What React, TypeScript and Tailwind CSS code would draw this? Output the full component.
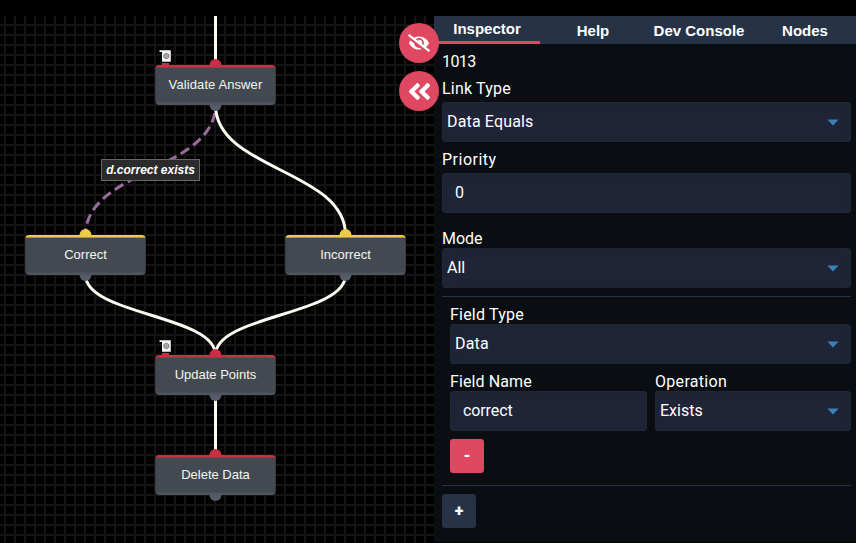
import React from 'react';
import { FaEyeSlash, FaAngleDoubleLeft } from 'react-icons/fa';

type NodeProps = { x: number; y: number; title: string; color: string; text: string; marker?: boolean };

function GraphNode({ x, y, title, color, text, marker }: NodeProps) {
  return (
    <div className="absolute h-10 w-[121px]" style={{ left: x, top: y }}>
      {marker && (
        <svg className="absolute -top-[15px] left-[4px]" width="13" height="16" viewBox="0 0 13 16">
          <path d="M.5 .2h11.3v11.6H3V2H.5z" fill="#f4f4f4" />
          <circle cx="7.3" cy="6" r="2.6" fill="#c4c4c4" stroke="#777" strokeWidth="1" />
          <path d="M5 6h5M7.3 3.5v5" stroke="#888" strokeWidth=".7" />
          <rect x="3" y="13" width="7" height="3" fill="#c92f42" />
        </svg>
      )}
      <svg className="absolute -top-[6px] left-0" width="121" height="53" viewBox="-.5 0 121 53">
        <circle cx="60" cy="6" r="6" fill={color} />
        <circle cx="60" cy="46" r="6" fill="#565b68" />
        <path d="M0 9.5V9.2Q0 6 4 6H116Q120 6 120 9.2V9.5z" fill={color} />
        <path d="M0 8.7h120V42a4 4 0 0 1-4 4H4a4 4 0 0 1-4-4z" fill="#50555f" />
        <path d="M0 8.7h120V41.5a2 2 0 0 1-2 2H2a2 2 0 0 1-2-2z" fill="#434951" />
      </svg>
      <div className={`relative flex h-10 items-center justify-center whitespace-nowrap font-['Liberation_Sans',sans-serif] text-[13px] text-[#f5f5ee] ${text}`}>
        {title}
      </div>
    </div>
  );
}

function Select({ value, text }: { value: string; text: string }) {
  return (
    <div className="flex h-10 items-center justify-between rounded-[3px] border border-[#202838] bg-[#1f2437] pr-[11px] pl-1 shadow-[inset_0_0_6px_#1c2633]">
      <span className={text}>{value}</span>
      <svg width="12" height="7" viewBox="0 0 12 7"><path d="M.3.5h11.4L6 6.5z" fill="#3d80b6" /></svg>
    </div>
  );
}

function Input({ value, text }: { value: string; text: string }) {
  return (
    <div className="flex h-10 items-center rounded-[3px] border border-[#202838] bg-[#1f2437] px-3 shadow-[inset_0_0_6px_#1c2633]">
      <span className={text}>{value}</span>
    </div>
  );
}

export default function App() {
  return (
    <div className="h-[543px] w-[856px] overflow-hidden bg-black pt-4">
      <div className="relative flex h-[527px]">
        <main className="relative h-[527px] w-[434px] shrink-0 overflow-hidden">
          <svg className="absolute inset-0" width="434" height="527" fill="none">
            <defs>
              <pattern id="grid" width="10" height="10" patternUnits="userSpaceOnUse">
                <path d="M4 0h2v10h-2zM0 8h10v2H0z" fill="#141414" />
              </pattern>
            </defs>
            <rect width="434" height="527" fill="url(#grid)" />
            <path d="M215.5 89C215.5 154 85.5 154 85.5 219" stroke="#986b9b" strokeWidth="3" strokeDasharray="10 5" strokeDashoffset="-7.8" />
            <g stroke="#fbfbf2" strokeWidth="3">
              <path d="M215.5 0V49" />
              <path d="M215.5 89C215.5 154 345.5 154 345.5 219" />
              <path d="M85.5 259C85.5 299 215.5 299 215.5 339" />
              <path d="M345.5 259C345.5 299 215.5 299 215.5 339" />
              <path d="M215.5 379V439" />
            </g>
          </svg>
          <GraphNode x={155} y={49} title="Validate Answer" color="#c92f42" text="tracking-[0.1px]" marker />
          <GraphNode x={25} y={219} title="Correct" color="#efcb48" text="" />
          <GraphNode x={285} y={219} title="Incorrect" color="#efcb48" text="" />
          <GraphNode x={155} y={339} title="Update Points" color="#c92f42" text="" marker />
          <GraphNode x={155} y={439} title="Delete Data" color="#c92f42" text="" />
          <div className="absolute top-[143px] left-[101px] flex h-[22px] w-[99px] items-center justify-center border border-[#686868] bg-[#2b2b2b] font-['Liberation_Sans',sans-serif] text-xs font-bold whitespace-nowrap text-white italic">
            d.correct exists
          </div>
        </main>
        <aside className="flex h-[526px] w-[422px] flex-col bg-[#0a0d11] font-[Roboto,sans-serif] text-base leading-5 text-white">
          <nav className="grid h-7 shrink-0 grid-cols-[106px_106px_106px_106px] bg-[#263346] text-center font-['Liberation_Sans',sans-serif] text-[15px] leading-[30px] font-bold">
            <div className="h-7 border-b-[3px] border-[#df4860] leading-[26px]">Inspector</div>
            <div>Help</div>
            <div>Dev Console</div>
            <div>Nodes</div>
          </nav>
          <div className="flex flex-col pt-2 pr-[5px] pl-2">
            <div className="h-[27px] tracking-[-0.6px]">1013</div>
            <div className="h-[23px] tracking-[0.2px]">Link Type</div>
            <Select value="Data Equals" text="tracking-[0.15px]" />
            <div className="mt-2 h-[23px] tracking-[0.5px]">Priority</div>
            <Input value="0" text="" />
            <div className="mt-4 h-[19px]">Mode</div>
            <Select value="All" text="" />
            <div className="mt-2 flex flex-col border-y border-[#253247] pt-2 pb-3 pl-2">
              <div className="h-[19px] tracking-[0.2px]">Field Type</div>
              <Select value="Data" text="tracking-[0.2px]" />
              <div className="mt-2 grid grid-cols-[197px_196px] gap-2">
                <div>
                  <div className="h-[19px] tracking-[0.1px]">Field Name</div>
                  <Input value="correct" text="tracking-[-0.1px]" />
                </div>
                <div>
                  <div className="h-[19px] tracking-[0.3px]">Operation</div>
                  <Select value="Exists" text="" />
                </div>
              </div>
              <button className="mt-2 size-[34px] rounded-[3px] bg-[#df4860] text-center font-black">-</button>
            </div>
            <button className="mt-2 size-[34px] rounded-[3px] bg-[#263346] text-center font-black">+</button>
          </div>
        </aside>
        <div className="absolute top-[7px] left-[399px] flex flex-col gap-2 text-white">
          <button className="flex size-10 items-center justify-center rounded-full bg-[#df4860]"><FaEyeSlash size={22} /></button>
          <button className="flex size-10 items-center justify-center rounded-full bg-[#df4860]"><FaAngleDoubleLeft size={27} /></button>
        </div>
      </div>
    </div>
  );
}
